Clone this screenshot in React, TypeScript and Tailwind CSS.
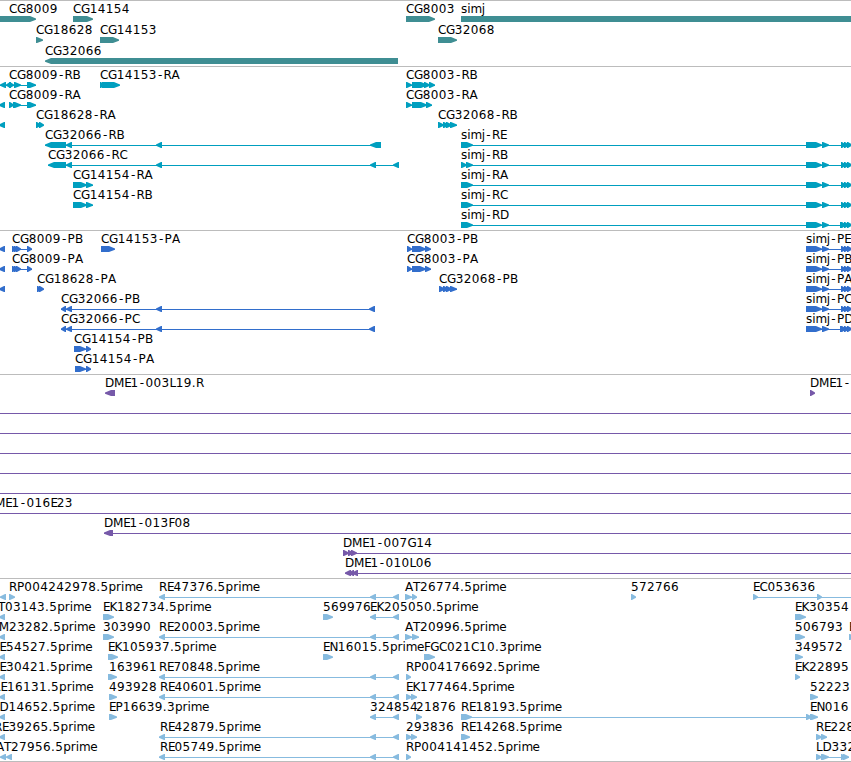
import React from 'react';

type Direction = '>' | '<' | '-';
type Feature = [start: number, end: number, dir: Direction];
type Label = [x: number, text: string];

interface TrackRow {
  labels?: Label[];
  lines?: [number, number][];
  features?: Feature[];
}

interface Track {
  id: string;
  color: string;
  rowClass: string;
  rows: TrackRow[];
}

const VIEW_WIDTH = 851;

// Advance widths of the label glyphs, in pixels
const ADVANCE: Record<string, number> = {
  A: 8, B: 7.5, C: 8, D: 9, E: 6.4, F: 6.2, G: 8.8, K: 7.5, L: 6.4, M: 10.2, N: 8.3, P: 7.3, R: 8, T: 7,
  '-': 6.8, '.': 4.2, p: 7.6, r: 5, i: 3.3, m: 11.2, e: 7.2, s: 6.3, j: 3.3,
};

const simjExons: Feature[] = [
  [806, 822, '>'],
  [822, 829, '>'],
  [841, 846, '>'],
  [844, 849, '>'],
  [847, 852, '>'],
];

const simjExonsLong: Feature[] = [[840, 845, '>'], ...simjExons];

const reExons: Feature[] = [
  [159, 165, '<'],
  [370, 376, '<'],
  [393, 399, '<'],
];

const leftEdge: Feature = [-1, 5, '<'];

const tracks: Track[] = [
  {
    id: 'genes',
    color: '#3f8e93',
    rowClass: 'h-[21px]',
    rows: [
      {
        labels: [[9, 'CG8009'], [73, 'CG14154'], [406, 'CG8003'], [461, 'simj']],
        features: [[-5, 36, '>'], [73, 93, '>'], [406, 435, '>'], [461, 860, '-']],
      },
      {
        labels: [[36, 'CG18628'], [100, 'CG14153'], [438, 'CG32068']],
        features: [[36, 43, '>'], [100, 119, '>'], [438, 457, '>']],
      },
      {
        labels: [[45, 'CG32066']],
        features: [[45, 398, '<']],
      },
    ],
  },
  {
    id: 'transcripts',
    color: '#009fbf',
    rowClass: 'h-5',
    rows: [
      {
        labels: [[9, 'CG8009-RB'], [100, 'CG14153-RA'], [406, 'CG8003-RB']],
        lines: [[0, 36], [406, 435]],
        features: [
          [0, 6, '<'], [6, 11, '<'], [9, 14, '>'], [14, 21, '>'], [27, 36, '>'],
          [100, 104, '>'], [102, 120, '>'],
          [406, 412, '>'], [412, 427, '>'], [424, 430, '>'], [429, 435, '>'],
        ],
      },
      {
        labels: [[9, 'CG8009-RA'], [406, 'CG8003-RA']],
        lines: [[9, 36], [406, 432]],
        features: [
          leftEdge, [9, 14, '>'], [13, 21, '>'], [27, 36, '>'],
          [406, 412, '>'], [412, 427, '>'], [426, 432, '>'],
        ],
      },
      {
        labels: [[36, 'CG18628-RA'], [438, 'CG32068-RB']],
        lines: [[438, 457]],
        features: [
          leftEdge, [36, 41, '>'], [39, 44, '>'],
          [438, 444, '>'], [443, 449, '>'], [446, 452, '>'], [450, 457, '>'],
        ],
      },
      {
        labels: [[45, 'CG32066-RB'], [461, 'simj-RE']],
        lines: [[45, 381], [461, 851]],
        features: [[45, 66, '<'], [66, 72, '<'], [156, 162, '<'], [370, 381, '<'], [461, 473, '>'], ...simjExons],
      },
      {
        labels: [[48, 'CG32066-RC'], [461, 'simj-RB']],
        lines: [[48, 399], [461, 851]],
        features: [
          [48, 66, '<'], [66, 72, '<'], [156, 162, '<'], [370, 376, '<'], [393, 399, '<'],
          [461, 467, '>'], [466, 473, '>'], ...simjExons,
        ],
      },
      {
        labels: [[73, 'CG14154-RA'], [461, 'simj-RA']],
        lines: [[73, 93], [461, 851]],
        features: [[73, 87, '>'], [86, 93, '>'], [461, 473, '>'], ...simjExons],
      },
      {
        labels: [[73, 'CG14154-RB'], [461, 'simj-RC']],
        lines: [[73, 93], [461, 851]],
        features: [[73, 87, '>'], [86, 93, '>'], [461, 473, '>'], ...simjExons],
      },
      {
        labels: [[461, 'simj-RD']],
        lines: [[461, 851]],
        features: [[461, 473, '>'], ...simjExonsLong],
      },
    ],
  },
  {
    id: 'proteins',
    color: '#326ecc',
    rowClass: 'h-5',
    rows: [
      {
        labels: [[12, 'CG8009-PB'], [101, 'CG14153-PA'], [407, 'CG8003-PB'], [806, 'simj-PE']],
        lines: [[12, 32], [407, 431], [806, 851]],
        features: [
          leftEdge, [12, 17, '>'], [14, 19, '>'], [16, 21, '>'], [27, 32, '>'], [101, 115, '>'],
          [407, 412, '>'], [412, 426, '>'], [425, 431, '>'], ...simjExons,
        ],
      },
      {
        labels: [[12, 'CG8009-PA'], [407, 'CG8003-PA'], [806, 'simj-PB']],
        lines: [[12, 32], [407, 431], [806, 851]],
        features: [
          leftEdge, [12, 17, '>'], [14, 19, '>'], [16, 21, '>'], [27, 32, '>'],
          [407, 412, '>'], [412, 426, '>'], [425, 431, '>'], ...simjExons,
        ],
      },
      {
        labels: [[37, 'CG18628-PA'], [439, 'CG32068-PB'], [806, 'simj-PA']],
        lines: [[439, 457], [806, 851]],
        features: [
          leftEdge, [37, 42, '>'], [39, 44, '>'],
          [439, 445, '>'], [443, 449, '>'], [446, 452, '>'], [450, 457, '>'], ...simjExons,
        ],
      },
      {
        labels: [[61, 'CG32066-PB'], [806, 'simj-PC']],
        lines: [[61, 375], [806, 851]],
        features: [[61, 66, '<'], [66, 72, '<'], [156, 162, '<'], [369, 375, '<'], ...simjExons],
      },
      {
        labels: [[61, 'CG32066-PC'], [806, 'simj-PD']],
        lines: [[61, 375], [806, 851]],
        features: [[61, 66, '<'], [66, 72, '<'], [156, 162, '<'], [369, 375, '<'], ...simjExonsLong],
      },
      {
        labels: [[74, 'CG14154-PB']],
        lines: [[74, 91]],
        features: [[74, 86, '>'], [86, 91, '>']],
      },
      {
        labels: [[75, 'CG14154-PA']],
        lines: [[75, 91]],
        features: [[75, 86, '>'], [86, 91, '>']],
      },
    ],
  },
  {
    id: 'clones',
    color: '#7659a9',
    rowClass: 'h-5',
    rows: [
      {
        labels: [[105, 'DME1-003L19.R'], [810, 'DME1-']],
        features: [[105, 115, '<'], [810, 815, '>']],
      },
      { lines: [[0, 851]] },
      { lines: [[0, 851]] },
      { lines: [[0, 851]] },
      { lines: [[0, 851]] },
      { lines: [[0, 851]] },
      { labels: [[-14, 'DME1-016E23']], lines: [[0, 851]] },
      { labels: [[104, 'DME1-013F08']], lines: [[104, 851]], features: [[104, 113, '<']] },
      {
        labels: [[343, 'DME1-007G14']],
        lines: [[343, 851]],
        features: [[343, 349, '>'], [348, 353, '>'], [351, 357, '>']],
      },
      {
        labels: [[345, 'DME1-010L06']],
        lines: [[345, 851]],
        features: [[345, 351, '<'], [349, 354, '<'], [352, 358, '<']],
      },
    ],
  },
  {
    id: 'ests',
    color: '#87bbdf',
    rowClass: 'h-5',
    rows: [
      {
        labels: [[9, 'RP004242978.5prime'], [159, 'RE47376.5prime'], [405, 'AT26774.5prime'], [631, '572766'], [753, 'EC053636']],
        lines: [[159, 399], [405, 417], [753, 851]],
        features: [
          [0, 6, '<'], [9, 15, '>'], ...reExons, [405, 412, '>'], [412, 417, '>'],
          [631, 636, '>'], [753, 758, '>'], [817, 822, '>'],
        ],
      },
      {
        labels: [[-10, 'AT03143.5prime'], [103, 'EK182734.5prime'], [323, '569976'], [370, 'EK205050.5prime'], [795, 'EK30354']],
        lines: [[370, 399]],
        features: [leftEdge, [103, 114, '>'], [323, 333, '>'], [370, 376, '<'], [393, 399, '<'], [795, 806, '>']],
      },
      {
        labels: [[-10, 'GM23282.5prime'], [103, '303990'], [159, 'RE20003.5prime'], [405, 'AT20996.5prime'], [795, '506793'], [849, 'E']],
        lines: [[159, 399], [405, 419]],
        features: [
          leftEdge, [103, 114, '>'], ...reExons, [405, 412, '>'], [412, 419, '>'],
          [795, 805, '>'], [849, 856, '>'],
        ],
      },
      {
        labels: [[-8.5, 'RE54527.5prime'], [108, 'EK105937.5prime'], [323, 'EN16015.5prime'], [424, 'FGC021C10.3prime'], [795, '349572']],
        features: [leftEdge, [108, 118, '>'], [323, 333, '>'], [424, 435, '>'], [795, 803, '>']],
      },
      {
        labels: [[-8.5, 'RE30421.5prime'], [109, '163961'], [159, 'RE70848.5prime'], [406, 'RP004176692.5prime'], [795, 'EK22895']],
        lines: [[159, 399]],
        features: [leftEdge, [108, 117, '>'], ...reExons, [406, 411, '>'], [795, 800, '>']],
      },
      {
        labels: [[-7.5, 'RE16131.5prime'], [109, '493928'], [160, 'RE40601.5prime'], [406, 'EK177464.5prime'], [810, '52223']],
        lines: [[159, 399], [406, 417]],
        features: [leftEdge, [109, 117, '>'], ...reExons, [406, 412, '>'], [411, 417, '>'], [810, 818, '>']],
      },
      {
        labels: [[-7, 'LD14652.5prime'], [109, 'EP16639.3prime'], [370, '324854'], [416, '21876'], [461, 'RE18193.5prime'], [810, 'EN016']],
        lines: [[370, 399], [461, 812]],
        features: [
          leftEdge, [109, 117, '>'], [370, 376, '<'], [393, 399, '<'], [416, 422, '>'],
          [461, 472, '>'], [806, 812, '>'], [810, 818, '>'],
        ],
      },
      {
        labels: [[-6, 'RE39265.5prime'], [160, 'RE42879.5prime'], [406, '293836'], [461, 'RE14268.5prime'], [816, 'RE228']],
        lines: [[159, 399], [406, 417], [816, 827]],
        features: [
          leftEdge, ...reExons, [406, 412, '>'], [411, 417, '>'], [461, 470, '>'],
          [816, 822, '>'], [821, 827, '>'],
        ],
      },
      {
        labels: [[-4, 'AT27956.5prime'], [160, 'RE05749.5prime'], [406, 'RP004141452.5prime'], [816, 'LD332']],
        lines: [[159, 399], [816, 849]],
        features: [
          [0, 6, '<'], [6, 12, '<'], ...reExons, [406, 411, '>'],
          [816, 822, '>'], [821, 829, '>'], [841, 846, '>'], [843, 849, '>'],
        ],
      },
    ],
  },
];

function glyphPositions(x: number, text: string) {
  let pen = x;
  return [...text]
    .map((char) => {
      const at = char === '-' ? pen + 1.2 : pen;
      pen += ADVANCE[char] ?? 8;
      return at.toFixed(1);
    })
    .join(' ');
}

// The heads are slightly blunt so short exons stay readable
function featurePoints([start, end, dir]: Feature) {
  const head = Math.min(6, end - start - 1);
  if (dir === '>') {
    return `${start},15 ${end - head},15 ${end},17.4 ${end},18.8 ${end - head},21 ${start},21`;
  }
  if (dir === '<') {
    return `${end},15 ${start + head},15 ${start},17.4 ${start},18.8 ${start + head},21 ${end},21`;
  }
  return `${start},15 ${end},15 ${end},21 ${start},21`;
}

function RowChart({ row, color }: { row: TrackRow; color: string }) {
  return (
    <svg width={VIEW_WIDTH} height={20} className="block overflow-visible">
      {row.lines?.map(([from, to], i) => (
        <rect key={i} x={from} y={18} width={to - from} height={1} fill={color} />
      ))}
      {row.features?.map((feature, i) => (
        <polygon key={i} points={featurePoints(feature)} fill={color} />
      ))}
      {row.labels?.map(([x, text]) => (
        <text key={`${x}-${text}`} x={glyphPositions(x, text)} y={12} fill="#000">
          {text}
        </text>
      ))}
    </svg>
  );
}

function TrackPanel({ track }: { track: Track }) {
  return (
    <section className={`border-t border-[#bcbcbc] ${track.id === 'genes' ? 'pb-[2px]' : 'pb-[3px]'}`}>
      {track.rows.map((row, i) => (
        <div key={i} className={track.rowClass}>
          <RowChart row={row} color={track.color} />
        </div>
      ))}
    </section>
  );
}

export default function App() {
  return (
    <main className="w-[851px] h-[762px] overflow-hidden bg-white border-b border-[#bcbcbc] font-['DejaVu_Sans',sans-serif] text-[12px]">
      {tracks.map((track) => (
        <TrackPanel key={track.id} track={track} />
      ))}
    </main>
  );
}
